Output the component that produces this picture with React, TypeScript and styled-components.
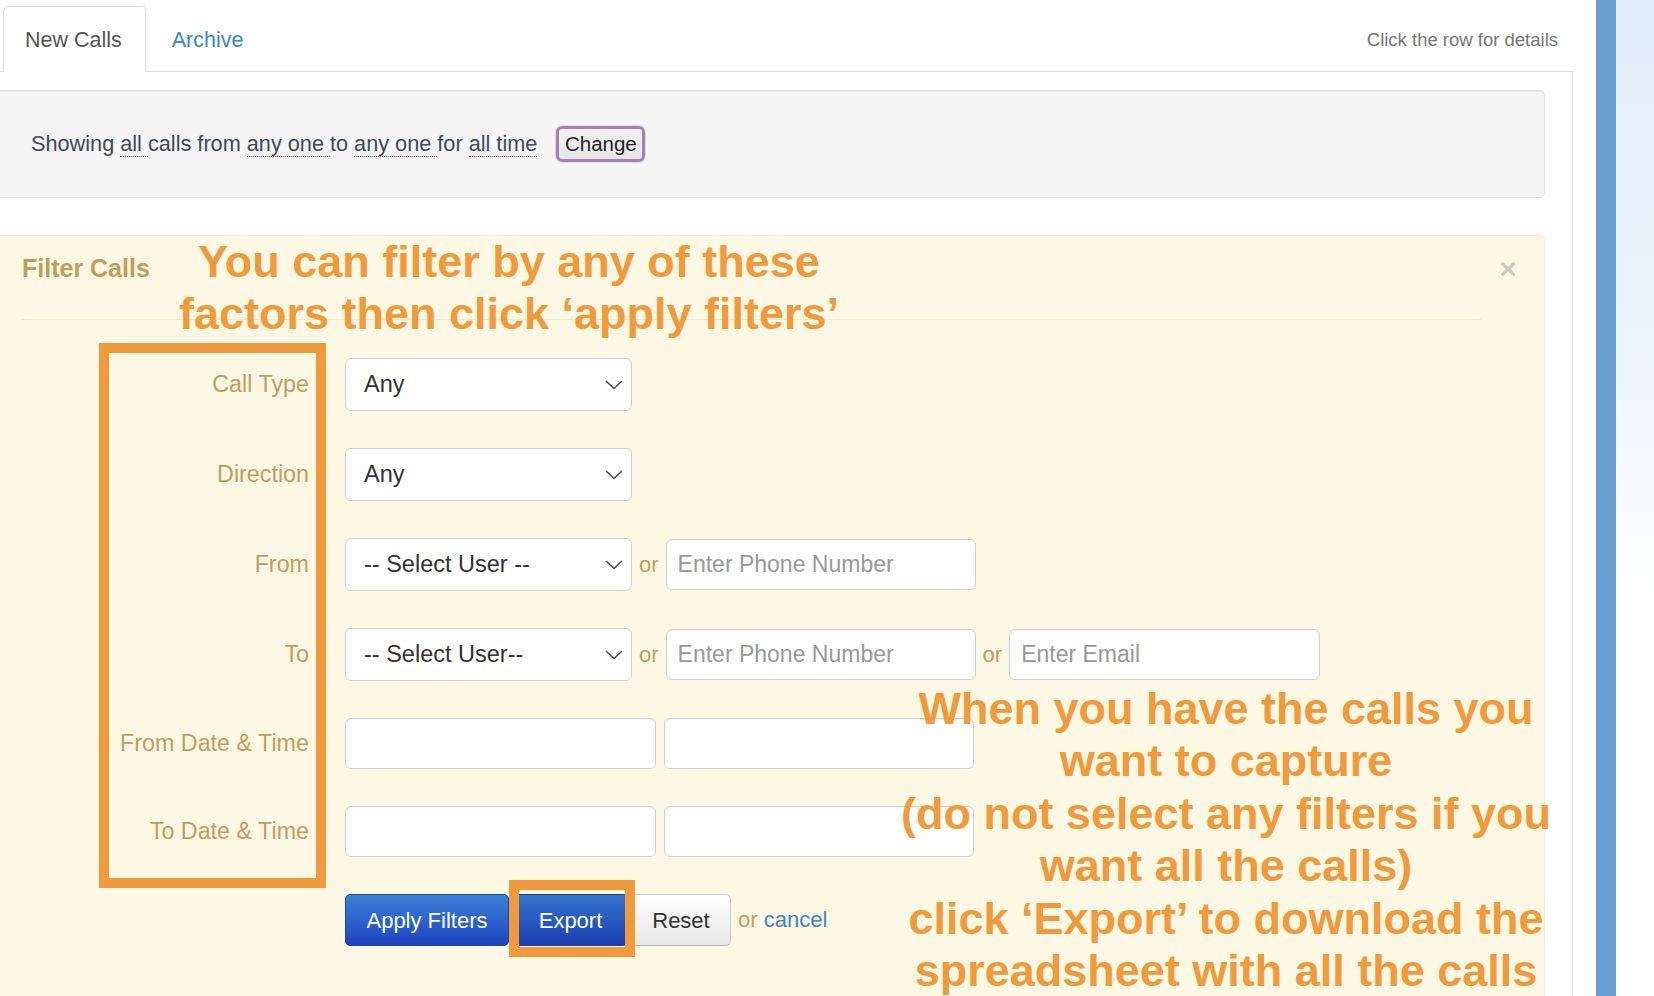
import React from "react";
import styled, { createGlobalStyle } from "styled-components";

const ORANGE = "#f09a3b";
const TAN = "#c29e5e";

const GlobalStyle = createGlobalStyle`
  html, body { margin: 0; padding: 0; background: #fff; overflow: hidden; }
  body { font-family: "Liberation Sans", Arial, Helvetica, sans-serif; }
  * { box-sizing: border-box; }
  input { font-family: inherit; }
`;

const Page = styled.div`
  position: relative;
  display: flex;
  width: 1654px;
  height: 996px;
  overflow: hidden;
`;

const Main = styled.div`
  width: 1596px;
  flex: none;
  display: flex;
  flex-direction: column;
  overflow: hidden;
`;

const Strip = styled.div`
  width: 20px;
  flex: none;
  background: #6a9fd0;
`;

const Fade = styled.div`
  flex: 1;
  background: linear-gradient(to bottom, #e1edf9 0%, #ecf4fc 35%, #ffffff 60%);
`;

const TabBar = styled.div`
  width: 1573px;
  height: 72px;
  flex: none;
  display: flex;
  align-items: flex-end;
  padding-left: 3px;
  border-bottom: 1px solid #ddd;
`;

const Tab = styled.div<{ $active?: boolean }>`
  height: 66px;
  margin-bottom: -1px;
  margin-right: 4px;
  padding: 3px 23px 0 21px;
  display: flex;
  align-items: center;
  font-size: 21.5px;
  border: 1px solid ${(p) => (p.$active ? "#ddd" : "transparent")};
  border-bottom-color: ${(p) => (p.$active ? "#fff" : "transparent")};
  border-radius: 5px 5px 0 0;
  background: ${(p) => (p.$active ? "#fff" : "transparent")};
  color: ${(p) => (p.$active ? "#555" : "#3a87c8")};
`;

const Hint = styled.div`
  margin-left: auto;
  height: 66px;
  display: flex;
  align-items: center;
  padding: 3px 15px 0 0;
  font-size: 18.5px;
  color: #777;
`;

const Content = styled.div`
  width: 1573px;
  flex: 1;
  border-right: 1px solid #ddd;
  padding: 18px 27px 0 0;
`;

const Well = styled.div`
  margin-left: -10px;
  height: 108px;
  display: flex;
  align-items: center;
  padding-left: 40px;
  background: #f5f5f5;
  border: 1px solid #e3e3e3;
  border-radius: 5px;
  box-shadow: inset 0 1px 1px rgba(0, 0, 0, 0.05);
  font-size: 21.7px;
  color: #3e4a59;
  white-space: pre;
`;

const Dotted = styled.span`
  border-bottom: 1px dotted #444;
`;

const ChangeButton = styled.button`
  margin-left: 19px;
  width: 89px;
  height: 36px;
  padding: 0;
  border: 3px solid #a57fbd;
  border-radius: 6px;
  box-shadow: 0 0 0 1px #dcdcdc;
  background: linear-gradient(to bottom, #f2f2f2, #e6e6e6);
  font-family: inherit;
  font-size: 20.5px;
  color: #222;
`;

const FilterPanel = styled.div`
  position: relative;
  margin-top: 37px;
  margin-left: -10px;
  height: 790px;
  padding: 17px 63px 0 31px;
  background: #fcf8e3;
  border: 1px solid #f4ecd3;
  border-radius: 5px;
`;

const PanelTitle = styled.h4`
  margin: 0;
  font-size: 25px;
  line-height: 30px;
  font-weight: bold;
  color: ${TAN};
`;

const CloseX = styled.div`
  position: absolute;
  top: 18px;
  right: 21px;
  width: 30px;
  height: 30px;
  display: flex;
  align-items: center;
  justify-content: center;
  font-size: 30px;
  line-height: 30px;
  font-weight: bold;
  color: rgba(0, 0, 0, 0.2);
`;

const Divider = styled.div`
  height: 1px;
  margin-top: 36px;
  background: #f1e7ca;
`;

const FormGrid = styled.div`
  display: grid;
  grid-template-columns: 287px auto;
  grid-template-rows: 53px 53px 53px 53px 51px 51px 52px;
  column-gap: 36px;
  row-gap: 37px;
  margin-top: 38px;
  justify-content: start;
`;

const Label = styled.div`
  display: flex;
  align-items: center;
  justify-content: flex-end;
  font-size: 23.3px;
  color: ${TAN};
`;

const Controls = styled.div<{ $gap?: number }>`
  display: flex;
  align-items: center;
  gap: ${(p) => p.$gap ?? 7}px;
`;

const SelectBox = styled.div`
  width: 287px;
  height: 53px;
  flex: none;
  display: flex;
  align-items: center;
  justify-content: space-between;
  padding: 0 8px 0 18px;
  background: #fff;
  border: 1px solid #cfcfcf;
  border-radius: 6px;
  font-size: 23.5px;
  color: #333;
`;

const TextInput = styled.input<{ $w: number }>`
  width: ${(p) => p.$w}px;
  height: 51px;
  flex: none;
  padding: 0 11px;
  background: #fff;
  border: 1px solid #cfcfcf;
  border-radius: 6px;
  box-shadow: inset 0 1px 1px rgba(0, 0, 0, 0.06);
  font-size: 23px;
  color: #555;
  outline: none;
  &::placeholder {
    color: #999;
  }
`;

const Or = styled.span`
  font-size: 22px;
  color: ${TAN};
`;

const CancelLink = styled.span`
  color: #3a87c8;
`;

const ButtonRow = styled.div`
  grid-column: 2;
  display: flex;
  align-items: center;
`;

const Button = styled.button<{ $variant: "primary" | "dark" | "plain"; $w: number; $mr: number }>`
  width: ${(p) => p.$w}px;
  height: 52px;
  margin-right: ${(p) => p.$mr}px;
  padding: 2px 0 0;
  border-radius: 5px;
  font-family: inherit;
  font-size: 22px;
  ${(p) =>
    p.$variant === "primary"
      ? `background: linear-gradient(to bottom, #3d80d8, #1c45c0); border: 1px solid #1d44b0; color: #fff;`
      : p.$variant === "dark"
      ? `background: linear-gradient(to bottom, #3574cb, #1b3fb2); border: 1px solid #1a3aa0; color: #fff;`
      : `background: linear-gradient(to bottom, #ffffff, #e6e6e6); border: 1px solid #ccc; border-bottom-color: #b5b5b5; color: #333;`}
`;

const CancelText = styled.span`
  margin-left: 7px;
  font-size: 22px;
  color: ${TAN};
`;

const TopNote = styled.div`
  position: absolute;
  left: 159px;
  top: 236px;
  width: 700px;
  font-size: 45px;
  line-height: 52px;
  font-weight: bold;
  text-align: center;
  white-space: nowrap;
  color: ${ORANGE};
  pointer-events: none;
`;

const SideNote = styled.div`
  position: absolute;
  left: 876px;
  top: 683px;
  width: 700px;
  font-size: 45px;
  line-height: 52.4px;
  font-weight: bold;
  text-align: center;
  white-space: nowrap;
  color: ${ORANGE};
  pointer-events: none;
`;

const LabelsHighlight = styled.div`
  position: absolute;
  left: 99px;
  top: 343px;
  width: 227px;
  height: 545px;
  border: 10px solid ${ORANGE};
  pointer-events: none;
`;

const ExportHighlight = styled.div`
  position: absolute;
  left: 509px;
  top: 880px;
  width: 126px;
  height: 77px;
  border: 10px solid ${ORANGE};
  pointer-events: none;
`;

const Chevron = () => (
  <svg width="18" height="10" viewBox="0 0 18 10" fill="none">
    <polyline points="1.5,1.5 9,8.5 16.5,1.5" stroke="#4a4a4a" strokeWidth="1.6" strokeLinecap="round" strokeLinejoin="round" />
  </svg>
);

const Select = ({ value }: { value: string }) => (
  <SelectBox>
    <span>{value}</span>
    <Chevron />
  </SelectBox>
);

export default function App() {
  return (
    <>
      <GlobalStyle />
      <Page>
        <Main>
          <TabBar>
            <Tab $active>New Calls</Tab>
            <Tab>Archive</Tab>
            <Hint>Click the row for details</Hint>
          </TabBar>
          <Content>
            <Well>
              <span>
                Showing <Dotted>all </Dotted>calls from <Dotted>any one </Dotted>to <Dotted>any one </Dotted>for{" "}
                <Dotted>all time</Dotted>
              </span>
              <ChangeButton>Change</ChangeButton>
            </Well>
            <FilterPanel>
              <PanelTitle>Filter Calls</PanelTitle>
              <CloseX>×</CloseX>
              <Divider />
              <FormGrid>
                <Label>Call Type</Label>
                <Controls>
                  <Select value="Any" />
                </Controls>

                <Label>Direction</Label>
                <Controls>
                  <Select value="Any" />
                </Controls>

                <Label>From</Label>
                <Controls>
                  <Select value="-- Select User --" />
                  <Or>or</Or>
                  <TextInput $w={310} placeholder="Enter Phone Number" />
                </Controls>

                <Label>To</Label>
                <Controls>
                  <Select value="-- Select User--" />
                  <Or>or</Or>
                  <TextInput $w={310} placeholder="Enter Phone Number" />
                  <Or>or</Or>
                  <TextInput $w={311} placeholder="Enter Email" />
                </Controls>

                <Label>From Date &amp; Time</Label>
                <Controls $gap={8}>
                  <TextInput $w={311} />
                  <TextInput $w={310} />
                </Controls>

                <Label>To Date &amp; Time</Label>
                <Controls $gap={8}>
                  <TextInput $w={311} />
                  <TextInput $w={310} />
                </Controls>

                <ButtonRow>
                  <Button $variant="primary" $w={164} $mr={4}>
                    Apply Filters
                  </Button>
                  <Button $variant="dark" $w={115} $mr={3}>
                    Export
                  </Button>
                  <Button $variant="plain" $w={100} $mr={0}>
                    Reset
                  </Button>
                  <CancelText>
                    or <CancelLink>cancel</CancelLink>
                  </CancelText>
                </ButtonRow>
              </FormGrid>
            </FilterPanel>
          </Content>
        </Main>
        <Strip />
        <Fade />

        <TopNote>
          You can filter by any of these
          <br />
          factors then click ‘apply filters’
        </TopNote>
        <SideNote>
          When you have the calls you
          <br />
          want to capture
          <br />
          (do not select any filters if you
          <br />
          want all the calls)
          <br />
          click ‘Export’ to download the
          <br />
          spreadsheet with all the calls
        </SideNote>
        <LabelsHighlight />
        <ExportHighlight />
      </Page>
    </>
  );
}
